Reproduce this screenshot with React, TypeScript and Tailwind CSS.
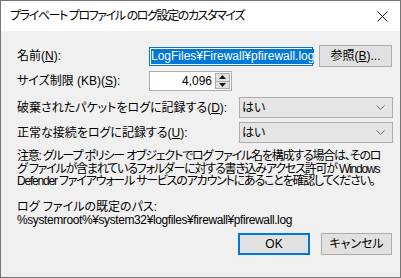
const font = "font-['Liberation_Sans','Noto_Sans_CJK_JP',sans-serif] [font-feature-settings:'palt']";

function Chevron() {
  return (
    <svg width="9" height="5" viewBox="0 0 9 5" className="shrink-0">
      <polyline points="0.5,0.5 4.5,4.5 8.5,0.5" fill="none" stroke="#6d6d6d" strokeWidth="1" />
    </svg>
  );
}

function Select({ value }: { value: string }) {
  return (
    <div className="flex h-[21px] w-[154px] items-center justify-between border border-[#adadad] bg-[#e5e5e5] pl-[2px] pr-[7px]">
      <span className="leading-none">{value}</span>
      <Chevron />
    </div>
  );
}

function Spinner() {
  return (
    <div className="flex h-[20px] w-[83px] items-center border border-[#acacac] bg-white">
      <span className="flex-1 pr-[3px] text-right leading-none">4,096</span>
      <div className="mr-[1px] flex h-[16px] w-[15px] flex-col border border-[#acacac] bg-[#e1e1e1]">
        <div className="flex flex-1 items-center justify-center border-b border-[#acacac]">
          <svg width="7" height="4" viewBox="0 0 7 4">
            <polygon points="0,4 3.5,0 7,4" fill="#1a1a1a" />
          </svg>
        </div>
        <div className="flex flex-1 items-center justify-center">
          <svg width="7" height="4" viewBox="0 0 7 4">
            <polygon points="0,0 3.5,4 7,0" fill="#1a1a1a" />
          </svg>
        </div>
      </div>
    </div>
  );
}

function Button({ children, focused }: { children: React.ReactNode; focused?: boolean }) {
  return (
    <div
      className={`flex h-[22px] items-center justify-center bg-[#e1e1e1] leading-none ${
        focused ? 'border-2 border-[#0078d7]' : 'border border-[#adadad]'
      }`}
    >
      {children}
    </div>
  );
}

export default function App() {
  return (
    <div className={`flex h-[278px] w-[401px] flex-col border border-[#767676] text-[12px] text-black ${font}`}>
      <div className="flex h-[30px] shrink-0 items-center justify-between bg-white pl-[9px] pr-[12px]">
        <span className="leading-none tracking-[-1.4px]">プライベート プロファイル のログ設定のカスタマイズ</span>
        <svg width="11" height="11" viewBox="0 0 11 11">
          <path d="M0.5 0.5 L10.5 10.5 M10.5 0.5 L0.5 10.5" stroke="#111" strokeWidth="1" />
        </svg>
      </div>
      <div className="flex flex-1 flex-col bg-[#f0f0f0] pl-[16px] pr-[7px] pt-[14px]">
        <div className="flex h-[22px] items-center">
          <span className="w-[132px] leading-none">
            名前(<u>N</u>):
          </span>
          <div className="flex h-[19px] w-[164px] items-center border border-[#0078d7] bg-white pl-[1px]">
            <span className="bg-[#0078d7] leading-[15px] text-white">LogFiles¥Firewall¥pfirewall.log</span>
            <span className="h-[14px] w-px bg-black" />
          </div>
          <div className="ml-[6px] w-[73px]">
            <Button>
              参照(<u>B</u>)...
            </Button>
          </div>
        </div>
        <div className="mt-[4px] flex h-[20px] items-center">
          <span className="w-[132px] leading-none">
            サイズ制限 (KB)(<u>S</u>):
          </span>
          <Spinner />
        </div>
        <div className="mt-[6px] flex h-[21px] items-center">
          <span className="w-[222px] leading-none">
            破棄されたパケットをログに記録する(<u>D</u>):
          </span>
          <Select value="はい" />
        </div>
        <div className="mt-[4px] flex h-[21px] items-center">
          <span className="w-[222px] leading-none">
            正常な接続をログに記録する(<u>U</u>):
          </span>
          <Select value="はい" />
        </div>
        <p className="mt-[7px] whitespace-nowrap leading-[12.5px] tracking-[-1.2px]">
          注意: グループ ポリシー オブジェクトでログ ファイル名を構成する場合は、そのロ
          <br />
          グ ファイルが含まれているフォルダーに対する書き込みアクセス許可が Windows
          <br />
          Defender ファイアウォール サービスのアカウントにあることを確認してください。
        </p>
        <p className="mt-[13px] whitespace-nowrap leading-[13px]">
          ログ ファイルの既定のパス:
          <br />
          <span className="tracking-[-0.4px]">%systemroot%¥system32¥logfiles¥firewall¥pfirewall.log</span>
        </p>
        <div className="mt-[6px] flex justify-end gap-[11px] pr-[1px]">
          <div className="w-[72px]">
            <Button focused>OK</Button>
          </div>
          <div className="w-[71px]">
            <Button>キャンセル</Button>
          </div>
        </div>
      </div>
    </div>
  );
}
